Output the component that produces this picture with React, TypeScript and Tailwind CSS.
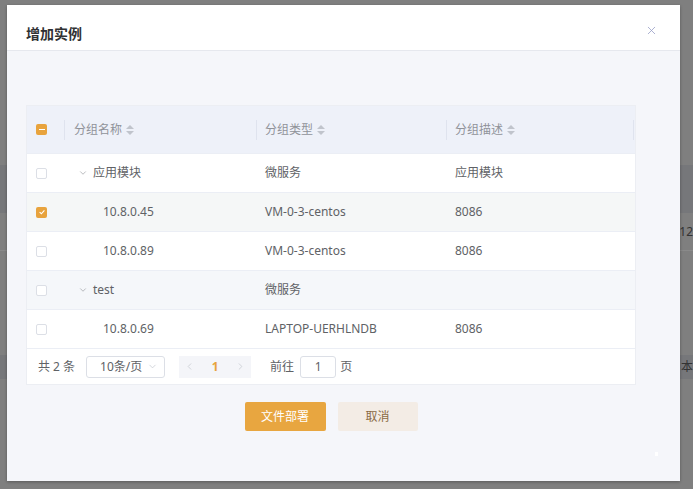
import { ChevronDown, ChevronLeft, ChevronRight, X } from "lucide-react"

const font = { fontFamily: '"Noto Sans", "Noto Sans CJK SC", sans-serif' }

type Row = {
  name: string
  type: string
  desc: string
  level: 0 | 1
  checked?: boolean
  bg: string
}

const rows: Row[] = [
  { name: "应用模块", type: "微服务", desc: "应用模块", level: 0, bg: "bg-white" },
  { name: "10.8.0.45", type: "VM-0-3-centos", desc: "8086", level: 1, checked: true, bg: "bg-[#f5f7f7]" },
  { name: "10.8.0.89", type: "VM-0-3-centos", desc: "8086", level: 1, bg: "bg-white" },
  { name: "test", type: "微服务", desc: "", level: 0, bg: "bg-[#f5f7fa]" },
  { name: "10.8.0.69", type: "LAPTOP-UERHLNDB", desc: "8086", level: 1, bg: "bg-white" },
]

function SortCaret() {
  return (
    <span className="ml-1 inline-flex flex-col gap-[2px]">
      <span className="h-0 w-0 border-x-[4px] border-b-[4px] border-x-transparent border-b-[#c0c4cc]" />
      <span className="h-0 w-0 border-x-[4px] border-t-[4px] border-x-transparent border-t-[#c0c4cc]" />
    </span>
  )
}

function Checkbox({ state }: { state?: "checked" | "half" }) {
  if (state === "checked") {
    return (
      <span className="flex h-[11px] w-[11px] items-center justify-center rounded-[2px] bg-[#e8a33d]">
        <svg viewBox="0 0 10 10" className="h-[8px] w-[8px]" fill="none" stroke="white" strokeWidth="1.4">
          <path d="M2 5.2 L4.2 7.2 L8 3" />
        </svg>
      </span>
    )
  }
  if (state === "half") {
    return (
      <span className="flex h-[11px] w-[11px] items-center justify-center rounded-[2px] bg-[#e8a33d]">
        <span className="h-[1px] w-[6px] bg-white" />
      </span>
    )
  }
  return <span className="block h-[11px] w-[11px] rounded-[2px] border border-[#dcdfe6] bg-white" />
}

export default function App() {
  return (
    <div className="relative h-[489px] w-[693px] overflow-hidden bg-[#7f7f7f]" style={font}>
      {/* page behind the mask */}
      <div className="flex h-full flex-col pt-[165px]">
        <div className="h-[48px] bg-[#76777a]" />
        <div className="flex h-[38px] items-center justify-end border-b border-[#8a8a8a] text-[12px] text-[#333]">312</div>
        <div className="h-[104px]" />
        <div className="flex h-[24px] items-center justify-end bg-[#76777a] text-[12px] text-[#333]">本</div>
      </div>

      <div className="absolute left-[7px] top-[5px] flex h-[476px] w-[673px] flex-col bg-[#f5f6fa] shadow-[0_1px_3px_rgba(0,0,0,0.3)]">
        <div className="flex h-[46px] items-center justify-between border-b border-[#e6e8ee] bg-white pl-[19px] pr-[22px]">
          <h2 className="pt-[11px] text-[14px] font-bold text-[#303133]">增加实例</h2>
          <X className="mt-[6px] h-[13px] w-[13px] text-[#9aa0c8]" strokeWidth={1.5} />
        </div>

        <div className="flex flex-1 flex-col pl-[19px] pt-[54px]">
          <div className="w-[610px] border border-[#eceef3] bg-white">
            <div className="flex h-[47px] items-center bg-[#eef1f9] text-[12px] text-[#909399]">
              <div className="flex w-[37px] pl-[9px]">
                <Checkbox state="half" />
              </div>
              <div className="flex h-[20px] w-[192px] items-center border-l border-[#dfe3ee] pl-[9px]">
                分组名称
                <SortCaret />
              </div>
              <div className="flex h-[20px] w-[190px] items-center border-l border-[#dfe3ee] pl-[8px]">
                分组类型
                <SortCaret />
              </div>
              <div className="flex h-[20px] w-[187px] items-center border-l border-[#dfe3ee] pl-[8px]">
                分组描述
                <SortCaret />
              </div>
              <div className="h-[20px] border-l border-[#dfe3ee]" />
            </div>

            {rows.map((r) => (
              <div key={r.name} className={`flex h-[39px] items-center border-t border-[#ebeef5] text-[12px] text-[#606266] ${r.bg}`}>
                <div className="flex w-[37px] pl-[9px]">
                  <Checkbox state={r.checked ? "checked" : undefined} />
                </div>
                <div className="flex w-[193px] items-center">
                  {r.level === 0 ? (
                    <span className="flex items-center pl-[14px]">
                      <ChevronDown className="mr-[5px] h-[10px] w-[10px] text-[#909399]" strokeWidth={1.5} />
                      {r.name}
                    </span>
                  ) : (
                    <span className="pl-[39px]">{r.name}</span>
                  )}
                </div>
                <div className="w-[190px] pl-[8px]">{r.type}</div>
                <div className="w-[187px] pl-[8px]">{r.desc}</div>
              </div>
            ))}

            <div className="flex h-[36px] items-center border-t border-[#ebeef5] pl-[11px] text-[12px] text-[#606266]">
              <span className="mr-[11px]">共 2 条</span>
              <div className="mr-[14px] flex h-[22px] w-[79px] items-center justify-between rounded-[3px] border border-[#dcdfe6] pl-[13px] pr-[6px]">
                <span>10条/页</span>
                <ChevronDown className="h-[11px] w-[11px] text-[#c0c4cc]" strokeWidth={1.5} />
              </div>
              <div className="mr-[19px] flex h-[22px] w-[72px] items-center justify-between bg-[#f4f5f9] px-[5px]">
                <ChevronLeft className="h-[11px] w-[11px] text-[#c0c4cc]" strokeWidth={1.5} />
                <span className="font-bold text-[#e8a33d]">1</span>
                <ChevronRight className="h-[11px] w-[11px] text-[#c0c4cc]" strokeWidth={1.5} />
              </div>
              <span className="mr-[6px]">前往</span>
              <div className="mr-[4px] flex h-[22px] w-[36px] items-center justify-center rounded-[3px] border border-[#dcdfe6]">1</div>
              <span>页</span>
            </div>
          </div>

          <div className="mt-[17px] flex w-[610px] justify-center gap-[12px]">
            <button className="h-[29px] w-[81px] rounded-[2px] bg-[#e8a640] text-[12px] text-white">文件部署</button>
            <button className="h-[29px] w-[80px] rounded-[2px] bg-[#f3ece5] text-[12px] text-[#8a6a43]">取消</button>
          </div>

          <div className="ml-[629px] mt-[21px] h-[4px] w-[3px] bg-white" />
        </div>
      </div>
    </div>
  )
}
